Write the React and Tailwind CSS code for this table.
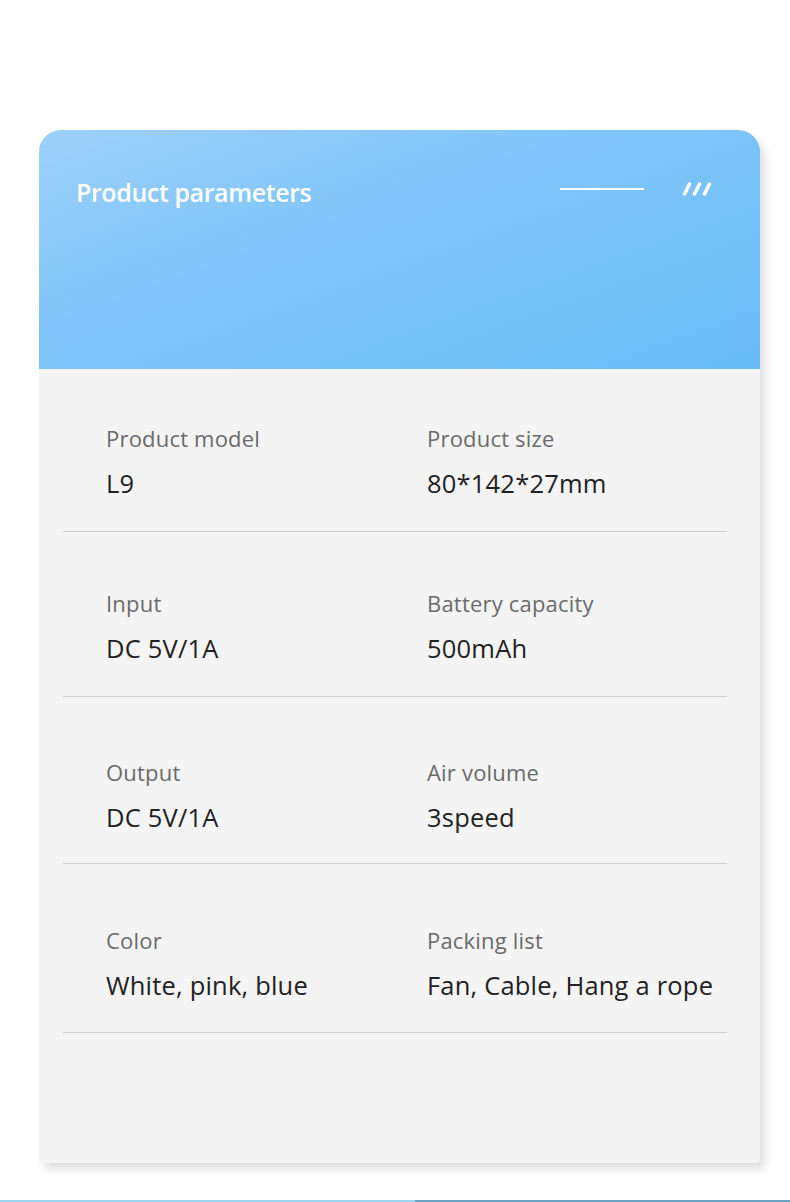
const rows = [
  { pad: 'pt-[57px] pb-[33px]', left: ['Product model', 'L9'], right: ['Product size', '80*142*27mm'] },
  { pad: 'pt-[59px] pb-[33px]', left: ['Input', 'DC 5V/1A'], right: ['Battery capacity', '500mAh'] },
  { pad: 'pt-[63px] pb-[31px]', left: ['Output', 'DC 5V/1A'], right: ['Air volume', '3speed'] },
  { pad: 'pt-[64px] pb-[32px]', left: ['Color', 'White, pink, blue'], right: ['Packing list', 'Fan, Cable, Hang a rope'] },
];

function Cell({ label, value }) {
  return (
    <div className="flex flex-col gap-[18px]">
      <div className="text-[22px] leading-[24px] tracking-[0.2px] text-[#6b6b6b]">{label}</div>
      <div className="text-[25.5px] leading-[30px] tracking-[0.2px] text-[#222222] whitespace-nowrap">{value}</div>
    </div>
  );
}

export default function App() {
  return (
    <div className="w-[790px] h-[1202px] bg-white flex flex-col font-['Open_Sans',sans-serif]">
      <div className="pt-[130px] pl-[39px]">
        <div className="w-[721px] h-[1033px] rounded-t-[22px] rounded-b-[4px] bg-[#f4f4f4] shadow-[5px_6px_10px_rgba(0,0,0,0.13)] flex flex-col overflow-hidden">
          {/* header */}
          <div className="h-[239px] bg-[linear-gradient(160deg,#9dd0f9_0%,#80c5f9_40%,#68bdf8_100%)] flex items-start justify-between pl-[37px] pr-[46px] pt-[44px]">
            <h1 className="text-[25px] leading-[36px] font-semibold text-white tracking-[-0.4px]">
              Product parameters
            </h1>
            <div className="flex items-center gap-[38px] pt-[8px]">
              <div className="w-[84px] h-[2px] bg-white" />
              <svg width="32" height="14" viewBox="0 0 32 14" className="text-white">
                <g stroke="currentColor" strokeWidth="3.5" strokeLinecap="round">
                  <line x1="2.5" y1="12" x2="7.5" y2="2" />
                  <line x1="12.5" y1="12" x2="17.5" y2="2" />
                  <line x1="22.5" y1="12" x2="27.5" y2="2" />
                </g>
              </svg>
            </div>
          </div>

          {/* parameter rows */}
          <div className="pl-[24px] pr-[33px]">
            {rows.map((r, i) => (
              <div key={i} className={`border-b border-[#cfcfcf] ${r.pad}`}>
                <div className="grid grid-cols-[321px_1fr] pl-[43px]">
                  <Cell label={r.left[0]} value={r.left[1]} />
                  <Cell label={r.right[0]} value={r.right[1]} />
                </div>
              </div>
            ))}
          </div>
        </div>
      </div>
      <div className="mt-auto flex h-[2px]">
        <div className="w-[415px] bg-[#9fd5ee]" />
        <div className="flex-1 bg-[#6aa0c2]" />
      </div>
    </div>
  );
}
